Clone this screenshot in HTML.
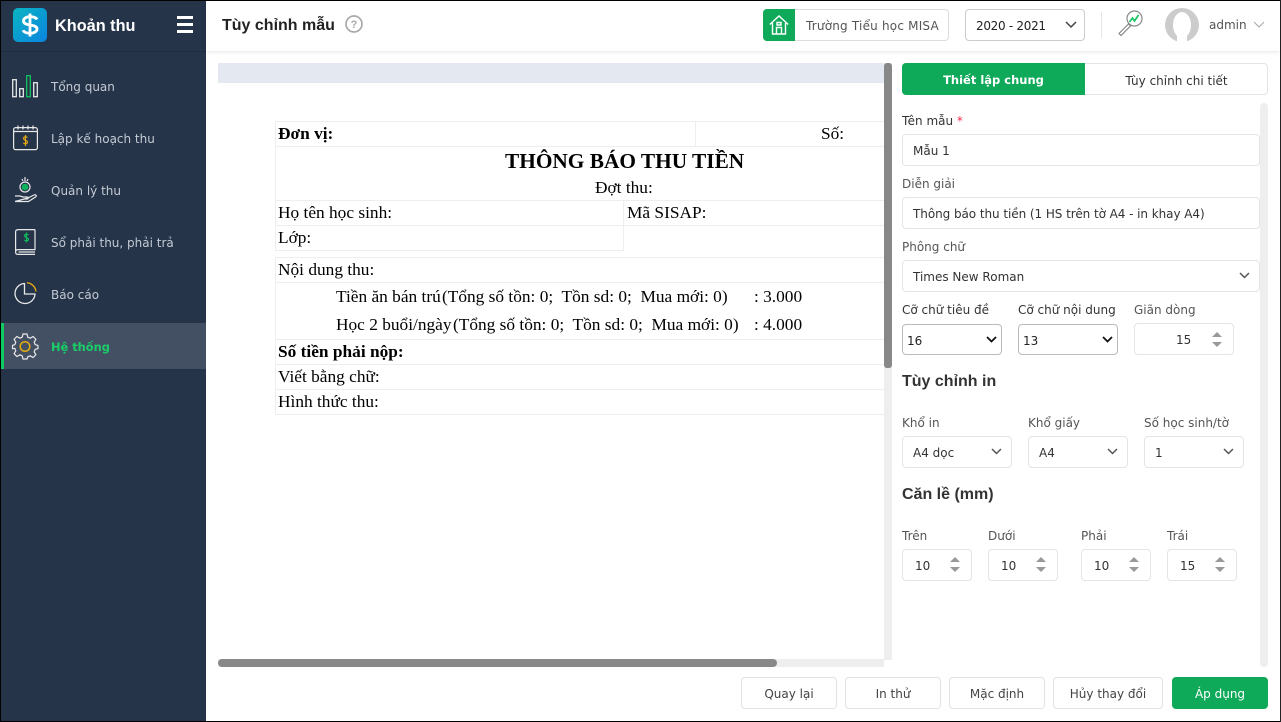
<!DOCTYPE html>
<html><head><meta charset="utf-8">
<style>
html,body{margin:0;padding:0}
body{width:1281px;height:722px;overflow:hidden;position:relative;background:#fff;font-family:"DejaVu Sans",sans-serif;font-size:12px;color:#333}
.t{position:absolute;white-space:nowrap;line-height:18px;margin-top:1px}
.b{position:absolute;box-sizing:border-box}
.s{font-family:"Liberation Serif",serif;font-size:17.330px;color:#000;line-height:20px;position:absolute;white-space:nowrap}
.l{position:absolute;background:#eee}
.nav{color:#c3cad3;font-size:12px}
.lab{color:#555}
.inp{position:absolute;box-sizing:border-box;border:1px solid #e4e4e4;border-radius:4px;background:#fff}
.btn{position:absolute;box-sizing:border-box;border:1px solid #e2e2e2;border-radius:4px;background:#fff;top:677px;height:32px;text-align:center;line-height:32px;color:#444;font-size:12px}
.h{font-size:16px;font-weight:bold;font-family:'Liberation Sans',sans-serif;color:#333;margin-top:2px}
svg{position:absolute;overflow:visible}
</style></head><body>
<!-- frame -->
<div class="b" style="left:0;top:0;width:1281px;height:1px;background:#000"></div>
<div class="b" style="left:0;top:721px;width:1281px;height:1px;background:#000"></div>
<div class="b" style="left:0;top:0;width:1px;height:722px;background:#000"></div>
<div class="b" style="left:1280px;top:0;width:1px;height:722px;background:#222"></div>
<!-- sidebar -->
<div class="b" style="left:1px;top:1px;width:205px;height:720px;background:#253449"></div>
<div class="b" style="left:1px;top:323px;width:205px;height:46px;background:#435064"></div>
<div class="b" style="left:1px;top:323px;width:3px;height:46px;background:#10c95f"></div>
<svg width="34" height="34" style="left:13px;top:8px"><defs><linearGradient id="g" x1="0" y1="0" x2="1" y2="1"><stop offset="0" stop-color="#0bb5c2"/><stop offset="1" stop-color="#0a84e0"/></linearGradient></defs><rect width="34" height="34" rx="5" fill="url(#g)"/><path d="M24 11.500c-1-2-3.500-2.800-7-2.800-4 0-6.500 1.800-6.500 4.300 0 5.500 13.500 2.500 13.500 8 0 2.500-3 4.300-7 4.300-3.500 0-6-1-7-3M17 5.500v23" fill="none" stroke="#fff" stroke-width="2.800"/></svg>
<div class="t" style="left:55px;top:14px;font-size:16.300px;font-weight:bold;color:#fff;line-height:20px;font-family:'Liberation Sans',sans-serif;margin-top:2px">Khoản thu</div>
<div class="b" style="left:177px;top:16px;width:16px;height:3px;background:#fff"></div>
<div class="b" style="left:177px;top:23px;width:16px;height:3px;background:#fff"></div>
<div class="b" style="left:177px;top:30px;width:16px;height:3px;background:#fff"></div>
<div class="b" style="left:1px;top:51px;width:205px;height:1px;background:#202e41"></div>
<svg width="30" height="24" style="left:12px;top:75px" fill="none" stroke="#e8e8e8" stroke-width="1.300"><rect x=".7" y="4.700" width="3.600" height="17"/><rect x="7.700" y="13.700" width="3.600" height="8"/><rect x="14.700" y=".7" width="3.600" height="21" stroke="#12c45f"/><rect x="21.700" y="7.700" width="3.600" height="14"/></svg>
<div class="t nav" style="left:51px;top:77px">Tổng quan</div>
<svg width="26" height="26" style="left:13px;top:125px" fill="none" stroke="#e8e8e8" stroke-width="1.200"><rect x=".6" y="2.600" width="23.800" height="22" rx="2"/><path d="M.6 6.500h23.800M5 .5v4M10 .5v4M15 .5v4M20 .5v4"/><path d="M14.500 12.500c-1-1-4-1-4 1 0 2 4 1.500 4 3.500 0 2-3 2-4.200 1M12.500 10v11" stroke="#e0a615"/></svg>
<div class="t nav" style="left:51px;top:129px">Lập kế hoạch thu</div>
<svg width="24" height="28" style="left:14px;top:177px" fill="none" stroke="#e8e8e8" stroke-width="1.200"><circle cx="11" cy="10" r="5" stroke="#e8e8e8"/><circle cx="11" cy="10" r="3.300" fill="#0bb45a" stroke="none"/><path d="M11 0v4M8 2l1 2M14 2l-1 2"/><path d="M1 19h5l3 1h4c1.500 0 1.500 2 0 2h-3M14 21l6-3c2-1 3 1 1.500 2l-7 4.500H1z"/></svg>
<div class="t nav" style="left:51px;top:181px">Quản lý thu</div>
<svg width="22" height="27" style="left:15px;top:229px" fill="none" stroke="#e8e8e8" stroke-width="1.200"><path d="M20 .6H3C1.500.6.600 1.500.600 3v20c0 1.500 1 2.400 2.400 2.400h17M20 .6v20H3c-1.500 0-2.400 1-2.400 2.400M3.500 23h16.500"/><path d="M13.500 6c-1-1-4-1-4 .8 0 2 4 1.500 4 3.500 0 1.800-3 1.800-4.200.8M11.500 3.500v10" stroke="#0cbd5c"/></svg>
<div class="t nav" style="left:51px;top:233px">Sổ phải thu, phải trả</div>
<svg width="24" height="24" style="left:14px;top:282px" fill="none" stroke-width="1.300"><path d="M10.500 1.500a10 10 0 1 0 10.500 10.500H10.500z" stroke="#e8e8e8"/><path d="M13 .7a10 10 0 0 1 9 8.800" stroke="#e6ac10"/></svg>
<div class="t nav" style="left:51px;top:285px">Báo cáo</div>
<svg width="27" height="27" style="left:12px;top:333px" fill="none" stroke="#e8e8e8" stroke-width="1.200"><path d="M11 1h4l.8 3.200 2.400 1 2.900-1.700 2.800 2.800-1.700 2.900 1 2.400L26 12.400v3.200l-2.800.8-1 2.400 1.700 2.900-2.800 2.800-2.900-1.700-2.400 1L15 26h-4l-.8-3.200-2.400-1-2.900 1.700-2.800-2.800 1.700-2.900-1-2.400L.5 15.600v-3.200l2.300-.8 1-2.400-1.700-2.900 2.800-2.800 2.900 1.700 2.400-1z"/><circle cx="13" cy="13.500" r="4.800" stroke="#e6ac10" stroke-width="1.500"/></svg>
<div class="t" style="left:51px;top:337px;color:#18cf68;font-weight:bold;font-size:11.400px">Hệ thống</div>
<!-- header -->
<div class="b" style="left:206px;top:1px;width:1074px;height:50px;background:#fff;box-shadow:0 1px 4px rgba(0,0,0,.1)"></div>
<div class="t h" style="left:222px;top:14px;color:#222;line-height:20px">Tùy chỉnh mẫu</div>
<svg width="18" height="18" style="left:345px;top:15px"><circle cx="9" cy="9" r="8" fill="none" stroke="#aaa" stroke-width="1.700"/><text x="9" y="13" text-anchor="middle" font-size="11" font-weight="bold" fill="#aaa" font-family="Liberation Sans">?</text></svg>
<div class="b" style="left:763px;top:9px;width:186px;height:32px;border:1px solid #ddd;border-radius:4px"></div>
<div class="b" style="left:763px;top:9px;width:32px;height:32px;background:#0fa95a;border-radius:4px 0 0 4px"></div>
<svg width="20" height="20" style="left:769px;top:15px" fill="none" stroke="#fff" stroke-width="1.400"><path d="M.8 9.500L10 1l9.200 8.500M3.500 8v11h13V8M7.500 19v-6.500h5V19M8 7.500h4v2.500H8z"/></svg>
<div class="t" style="left:806px;top:16px;font-size:12px;color:#555;letter-spacing:.2px">Trường Tiểu học MISA</div>
<div class="inp" style="left:965px;top:9px;width:120px;height:32px;border-color:#ccc"></div>
<div class="t" style="left:976px;top:16px;font-size:12px;color:#222;letter-spacing:-.3px">2020 - 2021</div>
<svg width="12" height="8" style="left:1065px;top:21px"><path d="M1 1l5 5 5-5" fill="none" stroke="#444" stroke-width="1.500"/></svg>
<div class="b" style="left:1101px;top:12px;width:1px;height:26px;background:#e5e5e5"></div>
<svg width="30" height="30" style="left:1117px;top:8px" fill="none"><circle cx="17.500" cy="10.500" r="7.500" stroke="#888" stroke-width="1.200"/><path d="M12.500 14l3-4 2 3 4-6" stroke="#12c45f" stroke-width="1.600"/><path d="M11.500 16L2 25.500l2 2L13.500 18z" stroke="#888" stroke-width="1.200"/></svg>
<div class="b" style="left:1165px;top:8px;width:34px;height:34px;border-radius:50%;background:#ccc"></div>
<div class="b" style="left:1173px;top:12px;width:18px;height:26px;border-radius:50%;background:#fff"></div>
<div class="b" style="left:1177px;top:34px;width:10px;height:8px;background:#fff"></div>
<div class="t" style="left:1209px;top:15px;font-size:12px;color:#555">admin</div>
<svg width="12" height="8" style="left:1253px;top:21px"><path d="M1 1l5 5 5-5" fill="none" stroke="#aaa" stroke-width="1.100"/></svg>
<!-- preview -->
<div class="b" style="left:218px;top:63px;width:666px;height:20px;background:#e4e8f0"></div>
<div class="b" style="left:884px;top:63px;width:8px;height:597px;background:#eee"></div>
<div class="b" style="left:884px;top:63px;width:8px;height:305px;background:#888;border-radius:3px"></div>
<div class="b" style="left:218px;top:659px;width:666px;height:8px;background:#eee"></div>
<div class="b" style="left:218px;top:659px;width:559px;height:8px;background:#888;border-radius:4px"></div>
<!-- table lines -->
<div class="l" style="left:275px;top:121px;width:609px;height:1px"></div>
<div class="l" style="left:275px;top:146px;width:609px;height:1px"></div>
<div class="l" style="left:275px;top:200px;width:609px;height:1px"></div>
<div class="l" style="left:275px;top:225px;width:609px;height:1px"></div>
<div class="l" style="left:275px;top:250px;width:349px;height:1px"></div>
<div class="l" style="left:275px;top:121px;width:1px;height:130px"></div>
<div class="l" style="left:695px;top:121px;width:1px;height:25px"></div>
<div class="l" style="left:623px;top:200px;width:1px;height:51px"></div>
<div class="l" style="left:275px;top:257px;width:609px;height:1px"></div>
<div class="l" style="left:275px;top:282px;width:609px;height:1px"></div>
<div class="l" style="left:275px;top:339px;width:609px;height:1px"></div>
<div class="l" style="left:275px;top:364px;width:609px;height:1px"></div>
<div class="l" style="left:275px;top:389px;width:609px;height:1px"></div>
<div class="l" style="left:275px;top:414px;width:609px;height:1px"></div>
<div class="l" style="left:275px;top:257px;width:1px;height:158px"></div>
<div class="s" style="left:278px;top:124px;font-weight:bold">Đơn vị:</div>
<div class="s" style="left:821px;top:124px">Số:</div>
<div class="s" style="left:505px;top:149px;font-size:21.330px;font-weight:bold;line-height:24px">THÔNG BÁO THU TIỀN</div>
<div class="s" style="left:595px;top:178px">Đợt thu:</div>
<div class="s" style="left:278px;top:203px">Họ tên học sinh:</div>
<div class="s" style="left:627px;top:203px">Mã SISAP:</div>
<div class="s" style="left:278px;top:228px">Lớp:</div>
<div class="s" style="left:278px;top:260px">Nội dung thu:</div>
<div class="s" style="left:336px;top:287px">Tiền ăn bán trú</div>
<div class="s" style="left:442px;top:287px">(Tổng số tồn: 0;&nbsp; Tồn sd: 0;&nbsp; Mua mới: 0)</div>
<div class="s" style="left:754px;top:287px">: 3.000</div>
<div class="s" style="left:336px;top:315px">Học 2 buổi/ngày</div>
<div class="s" style="left:453px;top:315px">(Tổng số tồn: 0;&nbsp; Tồn sd: 0;&nbsp; Mua mới: 0)</div>
<div class="s" style="left:754px;top:315px">: 4.000</div>
<div class="s" style="left:278px;top:342px;font-weight:bold">Số tiền phải nộp:</div>
<div class="s" style="left:278px;top:367px">Viết bằng chữ:</div>
<div class="s" style="left:278px;top:392px">Hình thức thu:</div>
<!-- tabs -->
<div class="b" style="left:902px;top:63px;width:366px;height:32px;border:1px solid #e4e4e4;border-radius:4px"></div>
<div class="b" style="left:902px;top:63px;width:183px;height:32px;background:#0fa95a;border-radius:4px 0 0 4px;color:#fff;font-weight:bold;text-align:center;line-height:35px;font-size:11.500px">Thiết lập chung</div>
<div class="t" style="left:1085px;top:71px;width:183px;text-align:center;color:#333">Tùy chỉnh chi tiết</div>
<!-- right scrollbar -->
<div class="b" style="left:1260px;top:103px;width:8px;height:564px;background:#eee;border-radius:4px"></div>
<!-- form -->
<div class="t lab" style="left:902px;top:111px;color:#333">Tên mẫu <span style="color:#f0304a">*</span></div>
<div class="inp" style="left:902px;top:134px;width:358px;height:32px"></div>
<div class="t" style="left:913px;top:141px">Mẫu 1</div>
<div class="t lab" style="left:902px;top:174px">Diễn giải</div>
<div class="inp" style="left:902px;top:197px;width:358px;height:32px"></div>
<div class="t" style="left:913px;top:204px;letter-spacing:-.06px">Thông báo thu tiền (1 HS trên tờ A4 - in khay A4)</div>
<div class="t lab" style="left:902px;top:237px">Phông chữ</div>
<div class="inp" style="left:902px;top:260px;width:358px;height:32px"></div>
<div class="t" style="left:913px;top:267px">Times New Roman</div>
<svg width="12" height="8" style="left:1239px;top:272px"><path d="M1 1l4.500 4.500L10 1" fill="none" stroke="#555" stroke-width="1.500"/></svg>
<div class="t" style="left:902px;top:300px">Cỡ chữ tiêu đề</div>
<div class="t" style="left:1018px;top:300px">Cỡ chữ nội dung</div>
<div class="t lab" style="left:1134px;top:300px">Giãn dòng</div>
<div class="inp" style="left:902px;top:324px;width:100px;height:31px;border-color:#bbb"></div>
<div class="t" style="left:907px;top:331px;color:#222">16</div>
<svg width="12" height="8" style="left:986px;top:336px"><path d="M1 1l4.500 4.500L10 1" fill="none" stroke="#111" stroke-width="1.800"/></svg>
<div class="inp" style="left:1018px;top:324px;width:100px;height:31px;border-color:#bbb"></div>
<div class="t" style="left:1023px;top:331px;color:#222">13</div>
<svg width="12" height="8" style="left:1102px;top:336px"><path d="M1 1l4.500 4.500L10 1" fill="none" stroke="#111" stroke-width="1.800"/></svg>
<div class="inp" style="left:1134px;top:323px;width:100px;height:32px"></div>
<div class="t" style="left:1176px;top:330px">15</div>
<svg width="12" height="18" style="left:1211px;top:331px" fill="#999"><path d="M1 6l5-5 5 5zM1 11l5 5 5-5z"/></svg>
<div class="t h" style="left:902px;top:371px">Tùy chỉnh in</div>
<div class="t lab" style="left:902px;top:413px">Khổ in</div>
<div class="t lab" style="left:1028px;top:413px">Khổ giấy</div>
<div class="t lab" style="left:1144px;top:413px">Số học sinh/tờ</div>
<div class="inp" style="left:902px;top:436px;width:110px;height:32px"></div>
<div class="t" style="left:913px;top:443px">A4 dọc</div>
<svg width="12" height="8" style="left:991px;top:448px"><path d="M1 1l4.500 4.500L10 1" fill="none" stroke="#555" stroke-width="1.500"/></svg>
<div class="inp" style="left:1028px;top:436px;width:100px;height:32px"></div>
<div class="t" style="left:1039px;top:443px">A4</div>
<svg width="12" height="8" style="left:1107px;top:448px"><path d="M1 1l4.500 4.500L10 1" fill="none" stroke="#555" stroke-width="1.500"/></svg>
<div class="inp" style="left:1144px;top:436px;width:100px;height:32px"></div>
<div class="t" style="left:1155px;top:443px">1</div>
<svg width="12" height="8" style="left:1223px;top:448px"><path d="M1 1l4.500 4.500L10 1" fill="none" stroke="#555" stroke-width="1.500"/></svg>
<div class="t h" style="left:902px;top:484px">Căn lề (mm)</div>
<div class="t lab" style="left:902px;top:526px">Trên</div>
<div class="t lab" style="left:988px;top:526px">Dưới</div>
<div class="t lab" style="left:1081px;top:526px">Phải</div>
<div class="t lab" style="left:1167px;top:526px">Trái</div>
<div class="inp" style="left:902px;top:549px;width:70px;height:32px"></div>
<div class="t" style="left:915px;top:556px">10</div>
<svg width="12" height="18" style="left:949px;top:556px" fill="#999"><path d="M1 6l5-5 5 5zM1 11l5 5 5-5z"/></svg>
<div class="inp" style="left:988px;top:549px;width:70px;height:32px"></div>
<div class="t" style="left:1001px;top:556px">10</div>
<svg width="12" height="18" style="left:1035px;top:556px" fill="#999"><path d="M1 6l5-5 5 5zM1 11l5 5 5-5z"/></svg>
<div class="inp" style="left:1081px;top:549px;width:70px;height:32px"></div>
<div class="t" style="left:1094px;top:556px">10</div>
<svg width="12" height="18" style="left:1128px;top:556px" fill="#999"><path d="M1 6l5-5 5 5zM1 11l5 5 5-5z"/></svg>
<div class="inp" style="left:1167px;top:549px;width:70px;height:32px"></div>
<div class="t" style="left:1180px;top:556px">15</div>
<svg width="12" height="18" style="left:1214px;top:556px" fill="#999"><path d="M1 6l5-5 5 5zM1 11l5 5 5-5z"/></svg>
<!-- footer -->
<div class="btn" style="left:741px;width:96px">Quay lại</div>
<div class="btn" style="left:845px;width:96px">In thử</div>
<div class="btn" style="left:949px;width:96px">Mặc định</div>
<div class="btn" style="left:1053px;width:110px">Hủy thay đổi</div>
<div class="btn" style="left:1172px;width:96px;background:#0fa95a;border-color:#0fa95a;color:#fff">Áp dụng</div>
</body></html>
